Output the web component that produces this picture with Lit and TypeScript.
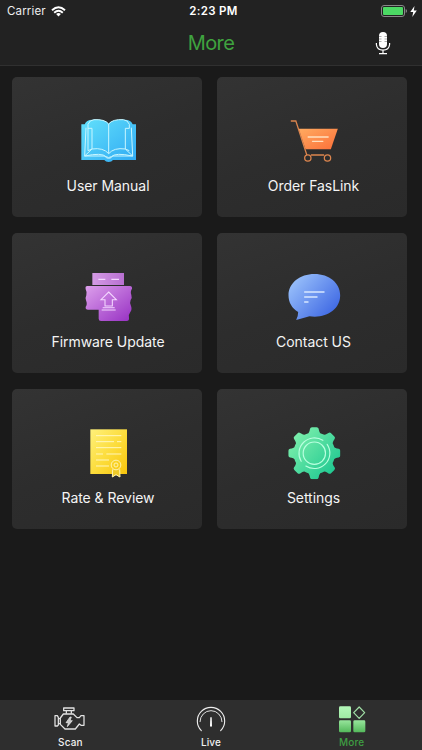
import { LitElement, html, css, svg } from "lit";
import { customElement, property } from "lit/decorators.js";

const manual = html`<svg viewBox="-6 0 240 192">
  <defs><linearGradient id="g" x1="0" y1="0" x2="1" y2="1"><stop offset="0" stop-color="#62e0fb"/><stop offset="1" stop-color="#30aaf3"/></linearGradient></defs>
  <path d="M34 58H44Q48 44 68 44Q104 42 116 56Q128 42 164 44Q184 44 188 58H198V165H129Q125 171 116 171Q107 171 103 165H34Z" fill="url(#g)"/>
  <g fill="none" stroke="#c8f6ff" stroke-width="3" stroke-linejoin="round">
    <path d="M116 57Q104 42 72 44Q59 45 54 58V137L66 132V70H54M116 57Q128 42 160 44Q173 45 178 58V70H166V132L178 137"/>
    <path d="M116 57V146Q100 127 66 132M116 146Q132 127 166 132M48 68L44 153H104Q108 160 116 160Q124 160 128 153H188L184 68M66 132L44 153Q96 142 108 155Q116 160 124 155Q136 142 188 153L166 132"/>
  </g></svg>`;

const cart = html`<svg viewBox="-19.5 0 240 192">
  <defs><linearGradient id="g" x1="0" y1="0" x2="1" y2="1"><stop offset="0" stop-color="#ffab61"/><stop offset="1" stop-color="#fb6f38"/></linearGradient></defs>
  <path d="M54 71H172L151 133H75Z" fill="url(#g)"/>
  <g fill="none" stroke="#dc854e" stroke-width="3.8"><path d="M31 48H46L79 150M91 150H131"/><circle cx="82" cy="159" r="9.5"/><circle cx="141" cy="159" r="9.5"/></g>
  <path d="M83 96H143M96 109H127" stroke="#ffe0bf" stroke-width="4" stroke-linecap="round"/></svg>`;

const firmware = html`<svg viewBox="-6 3 240 192">
  <defs><linearGradient id="g" x1="0" y1="0" x2="1" y2="1"><stop offset="0" stop-color="#dc9feb"/><stop offset="1" stop-color="#9730c3"/></linearGradient>
  <linearGradient id="h" x1="0" y1="0" x2="1" y2="0"><stop offset="0" stop-color="#d49be5"/><stop offset="1" stop-color="#b870d1"/></linearGradient></defs>
  <path d="M67 39H162V75H67Z" fill="url(#h)"/>
  <path d="M52 78H180Q187 78 186 86Q180 94 184 105Q187 113 182 120Q178 129 183 138Q187 149 181 156Q175 163 177 174Q178 183 170 183H93Q86 183 86 176V149H54Q46 149 47 141Q53 133 48 121Q45 114 49 106Q52 98 47 88Q45 78 52 78Z" fill="url(#g)"/>
  <path d="M85 58H106M124 58H147" stroke="#f4d8ff" stroke-width="3.5"/>
  <path d="M116 96L139 119H127V138H105V119H93ZM98 143H134M95 150H137" fill="none" stroke="#f4d8ff" stroke-width="3.2"/></svg>`;

const contact = html`<svg viewBox="-19.5 3 240 192">
  <defs><linearGradient id="g" x1="0" y1=".1" x2="1" y2=".9"><stop offset="0" stop-color="#9fc6fc"/><stop offset="1" stop-color="#355fe1"/></linearGradient></defs>
  <path d="M102 42C146 42 179 69 179 106C179 145 145 170 103 170Q94 170 87 169Q70 174 47 180Q53 169 53 156C34 145 24 127 24 106C24 69 58 42 102 42Z" fill="url(#g)"/>
  <path d="M71 96H132M71 111H111M71 126H84" stroke="#d7e8ff" stroke-width="4"/></svg>`;

const rate = html`<svg viewBox="-6 0 240 192">
  <defs><linearGradient id="g" x1="0" y1="0" x2="1" y2="1"><stop offset="0" stop-color="#fff17b"/><stop offset=".55" stop-color="#fcdb38"/><stop offset="1" stop-color="#f6c40d"/></linearGradient></defs>
  <rect x="61" y="37" width="110" height="134" fill="url(#g)"/>
  <path d="M78 56H154M78 74H132M141 74H154M78 92H154M78 111H99M109 111H154M78 129H117M78 147H117" stroke="#fff8c4" stroke-width="2.8"/>
  <path d="M128 158L127 181L138 174L150 181L149 158Z" fill="#efca28"/>
  <g fill="none" stroke="#fff3b0" stroke-width="3"><circle cx="138" cy="144" r="14.5"/><circle cx="138" cy="144" r="6"/><path d="M128 157L127 180L138 173L150 180L149 157"/></g></svg>`;

const cx = 101.5, cy = 108.5;
const settings = html`<svg viewBox="-19.5 0 240 192">
  <defs><linearGradient id="g" gradientUnits="userSpaceOnUse" x1="40" y1="50" x2="165" y2="165"><stop offset="0" stop-color="#7defac"/><stop offset="1" stop-color="#1fc891"/></linearGradient>
  <clipPath id="c"><circle cx=${cx} cy=${cy} r="62.5"/>${[0, 45, 90, 135, 180, 225, 270, 315].map(a => svg`<path d="M-22 -56Q-16 -60 -14 -68L-13 -73Q-12 -78 -7 -78H7Q12 -78 13 -73L14 -68Q16 -60 22 -56Z" transform="translate(${cx} ${cy}) rotate(${a})"/>`)}</clipPath></defs>
  <rect x="20" y="28" width="164" height="162" fill="url(#g)" clip-path="url(#c)"/>
  <g fill="none" stroke="#b9ffdf" stroke-width="3.4" stroke-linecap="round"><circle cx=${cx} cy=${cy} r="33.5"/>
  <path d="M127 70A46.500 46.500 0 0 0 62 133M76 147A46.500 46.500 0 0 0 140 82"/></g></svg>`;

const engine = html`<svg viewBox="0 0 96 78">
  <g fill="none" stroke="#e2e2e2" stroke-width="3.8" stroke-linejoin="round">
  <path d="M29 6H60V14H29ZM37 14V23M52 14V23"/>
  <path d="M28 24H58L69 35H76L81 29H90V58H81L76 54L64 69H33L19 55V36ZM19 38H13V53H19M3 29H10L13 34V57L10 60H3Z"/></g>
  <path d="M48 33L36 50H43L40 62L55 44H48L52 33Z" fill="#c8c8c8" stroke="#f2f2f2" stroke-width="2"/></svg>`;

const gauge = html`<svg viewBox="0 0 96 78">
  <g fill="none" stroke="#ededed" stroke-width="3.4" stroke-linecap="round"><path d="M19 74A41 41 0 1 1 77 74"/><path d="M15 47A33 33 0 0 1 81 47" stroke-width="2.8"/></g>
  <path d="M46 34H50L51 59Q51 62 48 62Q45 62 45 59Z" fill="#fff"/></svg>`;

const grid = html`<svg viewBox="0 0 96 78">
  <defs><linearGradient id="g" gradientUnits="userSpaceOnUse" x1="0" y1="0" x2="0" y2="78"><stop offset="0" stop-color="#b4f8b9"/><stop offset=".5" stop-color="#9eeaa3"/><stop offset="1" stop-color="#55b95c"/></linearGradient></defs>
  <g fill="url(#g)"><rect x="9" y="1" width="36" height="36" rx="4"/><rect x="9" y="43" width="36" height="36" rx="4"/><rect x="52" y="43" width="36" height="36" rx="4"/></g>
  <path d="M69.500 3L86 20L69.500 37L53 20Z" fill="none" stroke="#a0dfa5" stroke-width="3.6" stroke-linejoin="round"/></svg>`;

@customElement("menu-card")
class MenuCard extends LitElement {
  @property() label = "";
  @property({ attribute: false }) icon: unknown;
  static styles = css`
    :host { box-sizing: border-box; display: flex; flex-direction: column; align-items: center; height: 140px; padding: 28px 0 0 3px; border-radius: 5px; background: linear-gradient(160deg, #333 0%, #2d2d2d 50%, #2a2a2a 100%); }
    svg { display: block; width: 80px; height: 64px; overflow: visible; }
    .label { margin-top: 7px; font-size: 14px; line-height: 20px; letter-spacing: -.05px; color: #f4f4f4; white-space: nowrap; }
  `;
  render() {
    return html`${this.icon}<div class="label">${this.label}</div>`;
  }
}

@customElement("tab-item")
class TabItem extends LitElement {
  @property() label = "";
  @property({ attribute: false }) icon: unknown;
  @property({ type: Boolean, reflect: true }) active = false;
  static styles = css`
    :host { flex: 1; display: flex; flex-direction: column; align-items: center; padding-top: 6px; color: #f0f0f0; }
    :host([active]) { color: #3e9e42; }
    svg { display: block; width: 32px; height: 26px; overflow: visible; }
    .label { margin-top: 4px; font-size: 10px; line-height: 13px; font-weight: 500; letter-spacing: .15px; }
  `;
  render() {
    return html`${this.icon}<div class="label">${this.label}</div>`;
  }
}

@customElement("app-root")
class AppRoot extends LitElement {
  static styles = css`
    :host { display: flex; flex-direction: column; width: 422px; height: 750px; overflow: hidden; background: #1a1a1a; color: #fff; font-family: Inter, "Liberation Sans", sans-serif; }
    header { box-sizing: border-box; height: 66px; background: #222; border-bottom: 1px solid #303030; }
    .status { display: grid; grid-template-columns: 1fr auto 1fr; align-items: center; height: 22px; padding: 0 5px 0 7px; font-size: 11.5px; }
    .carrier { display: flex; align-items: center; gap: 5px; color: #eee; letter-spacing: .15px; }
    .wifi { width: 15px; height: 11px; }
    .time { padding-left: 3px; font-weight: 600; font-size: 11.5px; letter-spacing: .3px; }
    .power { display: flex; justify-content: flex-end; align-items: center; gap: 3px; }
    .battery { width: 26px; height: 12px; }
    .bolt { width: 7px; height: 11px; }
    .nav { display: grid; grid-template-columns: 1fr auto 1fr; align-items: center; height: 42px; }
    h1 { margin: 0; font-weight: 400; font-size: 20px; line-height: 24px; letter-spacing: -.6px; color: #3fa33f; }
    .mic { justify-self: end; width: 16px; height: 24px; margin-right: 31px; }
    main { flex: 1; display: grid; grid-template-columns: 190px 190px; grid-auto-rows: 140px; gap: 16px 15.5px; padding: 11px 0 0 11.5px; align-content: start; }
    footer { display: flex; height: 50px; background: #2e2e2e; }
  `;
  render() {
    return html`
      <header>
        <div class="status">
          <div class="carrier">Carrier
            <svg class="wifi" viewBox="0 0 15 11"><path d="M1 4.200Q7.500 -1.800 14 4.200M3.200 6.700Q7.500 2.800 11.800 6.700" fill="none" stroke="#fff" stroke-width="1.900"/><path d="M5.100 8Q7.500 6.100 9.900 8L7.500 10.600Z" fill="#fff"/></svg>
          </div>
          <div class="time">2:23 PM</div>
          <div class="power">
            <svg class="battery" viewBox="0 0 26 12"><rect x=".5" y=".5" width="23" height="11" rx="2.500" fill="none" stroke="#888"/><rect x="2" y="2" width="20" height="8" rx="1" fill="#4cd964"/><path d="M24.700 4Q26 4.300 26 6T24.700 8Z" fill="#888"/></svg>
            <svg class="bolt" viewBox="0 0 7 11"><path d="M4.500 0L.3 6H3.200L2.300 11L6.800 4.600H3.800Z" fill="#fff"/></svg>
          </div>
        </div>
        <div class="nav">
          <span></span><h1>More</h1>
          <svg class="mic" viewBox="0 0 16 24"><rect x="4" y="1" width="8" height="16" rx="4" fill="#fff"/><path d="M4 5.500H6.500M9.500 5.500H12M4 8H6.500M9.500 8H12M4 10.500H6.500M9.500 10.500H12" stroke="#777" stroke-width=".6"/><path d="M1.400 12V13.500Q2 19.200 8 19.200T14.600 13.500V12M8 19V22.300M4 22.700H12" fill="none" stroke="#fff" stroke-width="1.200"/></svg>
        </div>
      </header>
      <main>
        <menu-card label="User Manual" .icon=${manual}></menu-card>
        <menu-card label="Order FasLink" .icon=${cart}></menu-card>
        <menu-card label="Firmware Update" .icon=${firmware}></menu-card>
        <menu-card label="Contact US" .icon=${contact}></menu-card>
        <menu-card label="Rate &amp; Review" .icon=${rate}></menu-card>
        <menu-card label="Settings" .icon=${settings}></menu-card>
      </main>
      <footer>
        <tab-item label="Scan" .icon=${engine}></tab-item>
        <tab-item label="Live" .icon=${gauge}></tab-item>
        <tab-item label="More" .icon=${grid} active></tab-item>
      </footer>`;
  }
}
